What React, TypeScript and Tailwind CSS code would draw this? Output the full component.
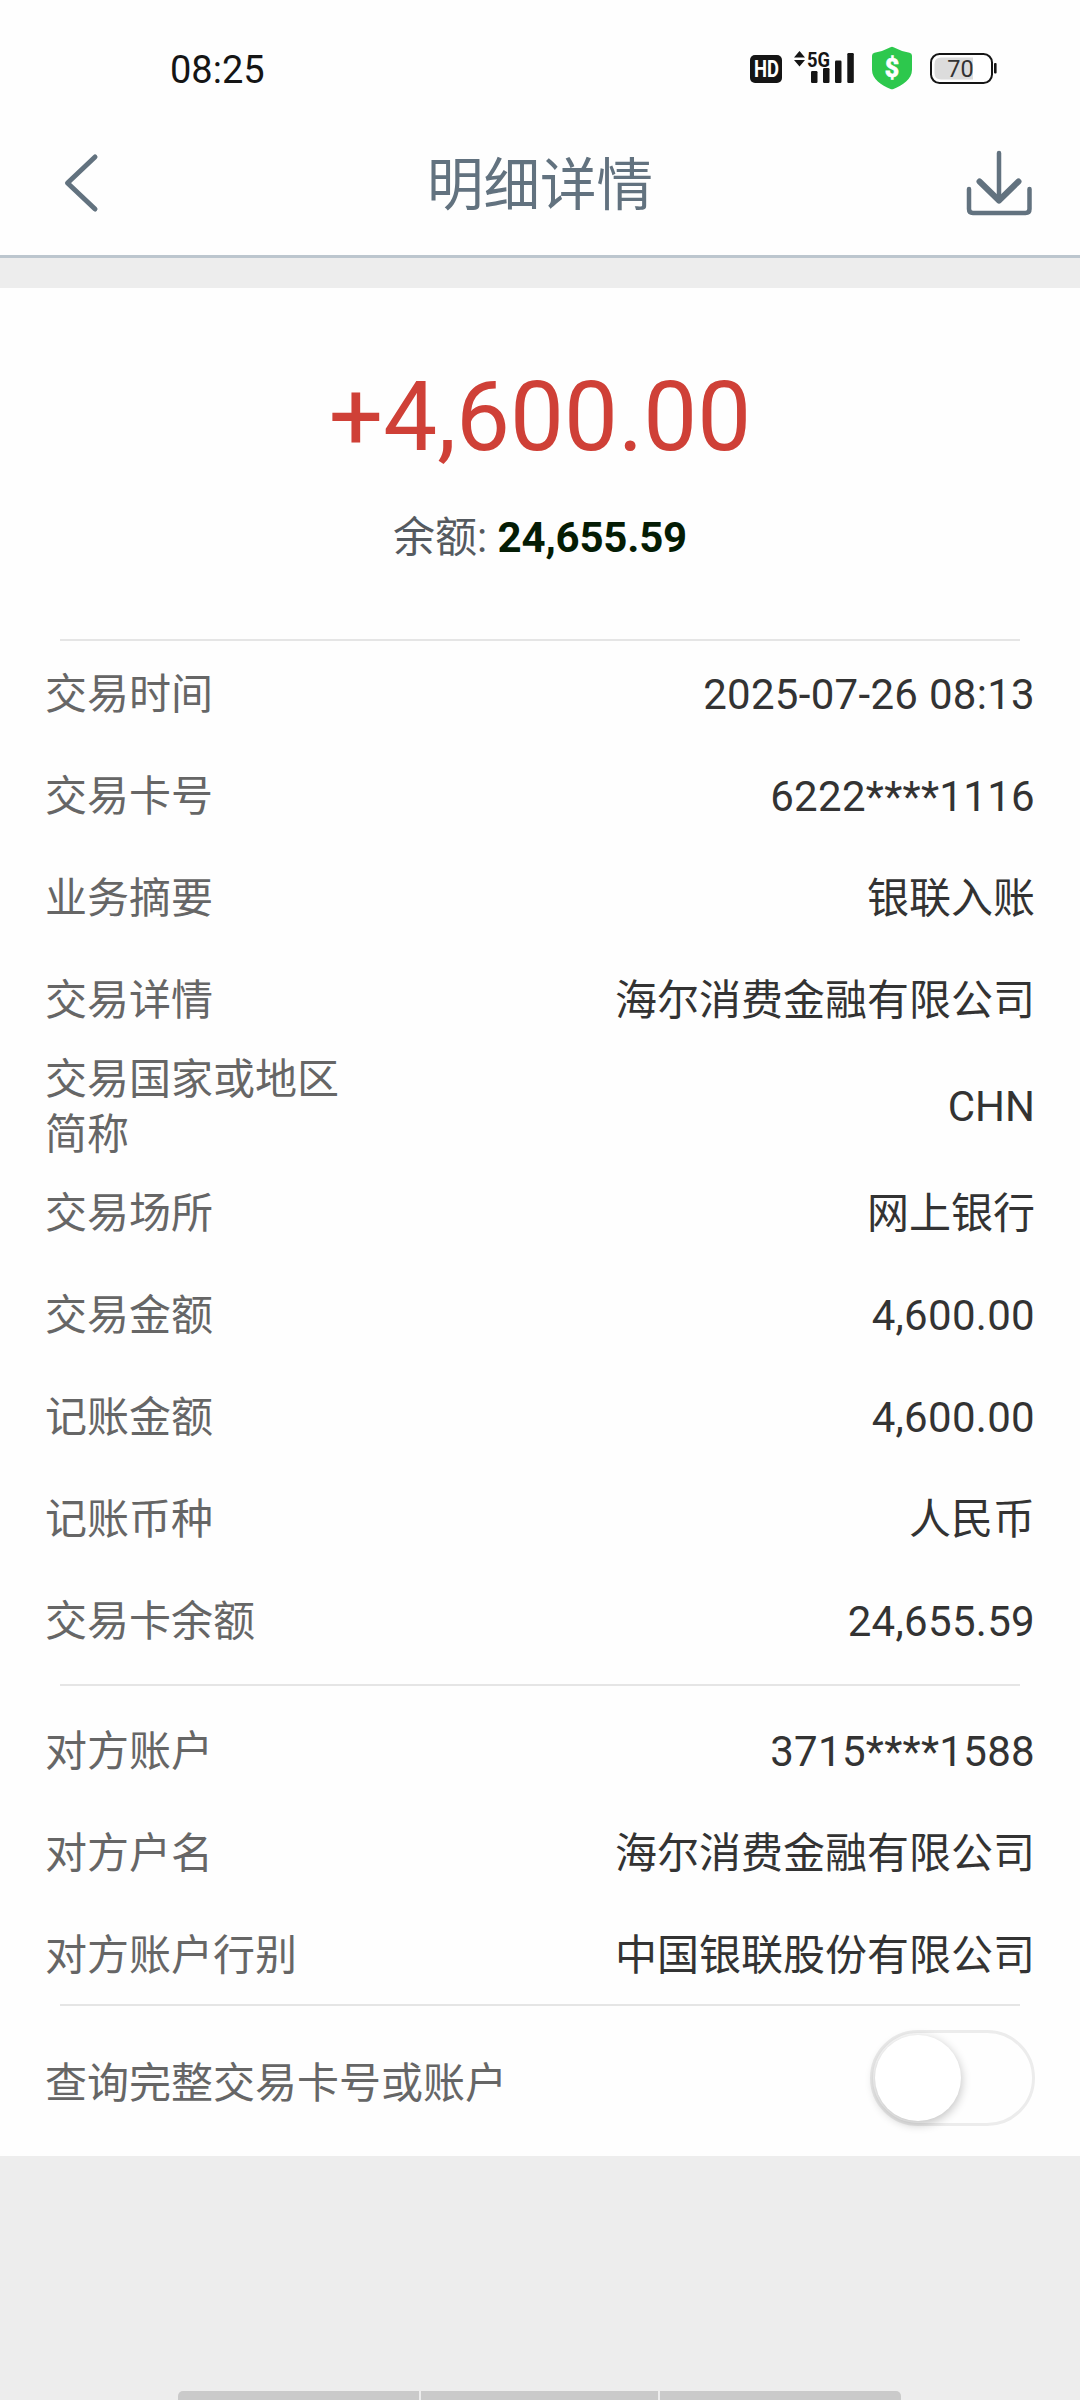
import React, { useState } from "react";

type Entry = { label: string; value: string; tall?: boolean };

const transaction: Entry[] = [
  { label: "交易时间", value: "2025-07-26 08:13" },
  { label: "交易卡号", value: "6222****1116" },
  { label: "业务摘要", value: "银联入账" },
  { label: "交易详情", value: "海尔消费金融有限公司" },
  { label: "交易国家或地区简称", value: "CHN", tall: true },
  { label: "交易场所", value: "网上银行" },
  { label: "交易金额", value: "4,600.00" },
  { label: "记账金额", value: "4,600.00" },
  { label: "记账币种", value: "人民币" },
  { label: "交易卡余额", value: "24,655.59" },
];

const counterparty: Entry[] = [
  { label: "对方账户", value: "3715****1588" },
  { label: "对方户名", value: "海尔消费金融有限公司" },
  { label: "对方账户行别", value: "中国银联股份有限公司" },
];

function StatusIcons() {
  return (
    <svg width="252" height="50" viewBox="748 43 252 50" className="block">
      <rect x="750" y="55" width="32" height="28" rx="5" fill="#151515" />
      <text x="754" y="77.200" fontSize="23" fontWeight="700" fill="#fff" textLength="25" lengthAdjust="spacingAndGlyphs">HD</text>
      <path d="M799.5 51l5.5 6.5h-11zM799.5 66.500l5.500-6.500h-11z" fill="#151515" />
      <text x="807" y="66.500" fontSize="21" fontWeight="700" fill="#151515" textLength="23" lengthAdjust="spacingAndGlyphs">5G</text>
      <rect x="811" y="71" width="6.5" height="12" rx="1.2" fill="#151515" />
      <rect x="823" y="68" width="6.5" height="15" rx="1.2" fill="#151515" />
      <rect x="835" y="60.5" width="6.5" height="22.5" rx="1.2" fill="#151515" />
      <rect x="847.3" y="53" width="6.5" height="30" rx="1.2" fill="#151515" />
      <path d="M890.500 47.200q1.500-.8 3 0q7.500 4 16 5.600q2.500.6 2.500 3v14c0 9.500-9.500 15.500-18.500 19.200q-1.500.6-3 0c-9-3.700-18.500-9.700-18.500-19.200v-14q0-2.400 2.500-3q8.500-1.600 16-5.600z" fill="#2dc84d" />
      <text x="892" y="76.500" textAnchor="middle" fontSize="25" fontWeight="800" fill="#fff" stroke="#fff" strokeWidth=".6">$</text>
      <rect x="931" y="54" width="61" height="29" rx="8.500" fill="#fff" stroke="#151515" strokeWidth="2" />
      <path d="M941 57.500h32v22h-32q-6.500 0-6.500-6.500v-9q0-6.500 6.500-6.500z" fill="#dcdcdc" />
      <rect x="994" y="63" width="2.600" height="10.500" rx="1" fill="#151515" />
      <text x="960.500" y="77" textAnchor="middle" fontSize="23.500" fill="#333">70</text>
    </svg>
  );
}

function Row({ label, value, tall }: Entry) {
  const numeric = /\d/.test(value);
  return (
    <div className={`flex items-center justify-between px-[45px] ${tall ? "h-[111px]" : "h-[102px]"}`}>
      <span className="w-[297px] leading-[55px] text-[#666]">{label}</span>
      <span className={`whitespace-nowrap text-[#333] ${numeric ? "tracking-[0.3px]" : ""}`}>{value}</span>
    </div>
  );
}

function Divider() {
  return <div className="mx-[60px] h-[2px] bg-[#e5e5e5]" />;
}

export default function App() {
  const [full, setFull] = useState(false);
  return (
    <div className="flex h-[2400px] w-[1080px] flex-col overflow-hidden bg-[#ededed] font-['Roboto','Noto_Sans_CJK_SC',sans-serif] text-[42px]">
      <div className="flex h-[110px] shrink-0 items-center justify-between bg-[#fefefe] pt-[26px] pr-[80px] pl-[170px]">
        <span className="pt-[4px] text-[38px] leading-none text-[#151515]">08:25</span>
        <StatusIcons />
      </div>

      <header className="grid h-[148px] shrink-0 grid-cols-[1fr_auto_1fr] items-center border-b-[3px] border-[#bcc6ce] bg-[#fefefe] pt-[8px] pr-[46px] pl-[46px]">
        <svg width="70" height="81" viewBox="46 146 70 81" fill="none" stroke="#62727f" strokeWidth="5" strokeLinecap="round" strokeLinejoin="round">
          <path d="M95 157L67.500 183L95 209" />
        </svg>
        <h1 className="text-[56.500px] leading-none text-[#62727f]">明细详情</h1>
        <svg width="70" height="81" viewBox="964 146 70 81" className="justify-self-end" fill="none" stroke="#62727f" strokeWidth="4.500" strokeLinecap="round" strokeLinejoin="round">
          <path d="M969 189V209q0 4 4 4h52.500q4 0 4-4V189M999 153v47" />
          <path d="M979.500 181.500L999 200.500L1018.500 181.500" strokeWidth="6" />
        </svg>
      </header>

      <main className="mt-[30px] h-[1868px] shrink-0 bg-[#fefefe]">
        <section className="flex h-[351px] flex-col items-center pt-[73px]">
          <div className="text-[96px] leading-[112px] text-[#cf4037]">+4,600.00</div>
          <div className="mt-[37px] text-[42px] leading-[56px] text-[#555a60]">
            余额: <span className="font-bold tracking-[-0.2px] text-[#041c04]">24,655.59</span>
          </div>
        </section>
        <Divider />
        <section className="pt-[2px] pb-[12px]">
          {transaction.map((e) => <Row key={e.label} {...e} />)}
        </section>
        <Divider />
        <section className="pt-[14px]">
          {counterparty.map((e) => <Row key={e.label} {...e} />)}
        </section>
        <div className="-mt-[2px]"><Divider /></div>
        <div className="flex h-[144px] items-center justify-between px-[45px]">
          <span className="mt-[10px] leading-[55px] text-[#666]">查询完整交易卡号或账户</span>
          <button
            role="switch"
            aria-checked={full}
            aria-label="查询完整交易卡号或账户"
            onClick={() => setFull(!full)}
            className={`flex h-[96px] w-[165px] items-center rounded-full border-[3px] border-[#ececec] px-[2px] ${full ? "justify-end bg-green-500" : "bg-[#fefefe]"}`}
          >
            <span className="size-[86px] rounded-full bg-white shadow-[0_3px_10px_1px_rgba(0,0,0,0.22)]" />
          </button>
        </div>
      </main>

      <nav className="mt-auto ml-[178px] flex h-[9px] w-[723px] gap-[2px] overflow-hidden rounded-t-[5px]">
        <div className="w-[241px] bg-[#cacaca]" />
        <div className="w-[237px] bg-[#cacaca]" />
        <div className="flex-1 bg-[#cacaca]" />
      </nav>
    </div>
  );
}
